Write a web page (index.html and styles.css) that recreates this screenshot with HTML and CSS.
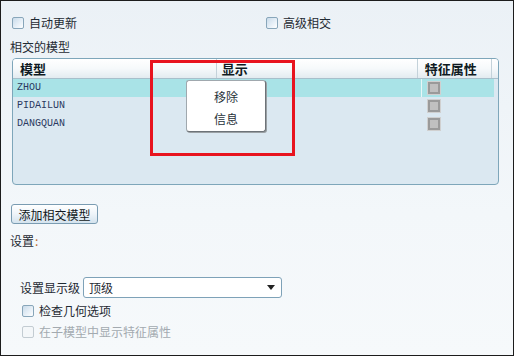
FILE: index.html
```html
<!DOCTYPE html>
<html>
<head>
<meta charset="utf-8">
<link rel="stylesheet" href="styles.css">
</head>
<body>
<div class="frame">
  <div class="top-row">
    <label class="chk-item first"><span class="chk"></span><span>自动更新</span></label>
    <label class="chk-item second"><span class="chk"></span><span>高级相交</span></label>
  </div>
  <div class="section-label">相交的模型</div>
  <div class="table">
    <div class="thead">
      <div class="th c1">模型</div>
      <div class="th c2">显示</div>
      <div class="th c3">特征属性</div>
      <div class="th c4"></div>
    </div>
    <div class="tbody">
      <div class="tr selected">
        <div class="td c1 name">ZHOU</div>
        <div class="td c2"></div>
        <div class="td c3"><span class="gchk"></span></div>
      </div>
      <div class="tr">
        <div class="td c1 name">PIDAILUN</div>
        <div class="td c2"></div>
        <div class="td c3"><span class="gchk"></span></div>
      </div>
      <div class="tr">
        <div class="td c1 name">DANGQUAN</div>
        <div class="td c2"></div>
        <div class="td c3"><span class="gchk"></span></div>
      </div>
    </div>
    <div class="menu">
      <div class="menu-item">移除</div>
      <div class="menu-item">信息</div>
    </div>
    <div class="highlight-box"></div>
  </div>
  <div class="btn-row"><button class="btn">添加相交模型</button></div>
  <div class="settings-label">设置<span class="colon">:</span></div>
  <div class="select-row">
    <span class="select-label">设置显示级</span>
    <div class="select"><span>顶级</span><span class="arrow"></span></div>
  </div>
  <label class="chk-item opt"><span class="chk"></span><span>检查几何选项</span></label>
  <label class="chk-item opt disabled"><span class="chk"></span><span>在子模型中显示特征属性</span></label>
</div>
</body>
</html>
```
FILE: styles.css
```css
* { box-sizing: border-box; }
html, body { margin: 0; padding: 0; }
body {
  width: 514px;
  height: 356px;
  font-family: "Noto Sans CJK SC", "Noto Sans", sans-serif;
  font-size: 12px;
  color: #1f2a33;
}
.frame {
  width: 514px;
  height: 356px;
  border: 1px solid #1c1c1c;
  background: linear-gradient(180deg, #ebf1f6 0%, #f3f7fa 60%, #f6f9fb 100%);
  display: flex;
  flex-direction: column;
  align-items: flex-start;
}
.top-row {
  display: flex;
  width: 100%;
  margin-top: 15px;
  height: 14px;
}
.chk-item {
  display: flex;
  align-items: center;
  height: 14px;
  line-height: 14px;
  gap: 5px;
}
.chk-item.first { margin-left: 11px; width: 254px; }
.chk {
  width: 12px;
  height: 12px;
  border: 1px solid #88a6ba;
  border-radius: 2px;
  background: linear-gradient(135deg, #c9dbea 0%, #e9f1f8 60%, #ffffff 100%);
  flex: none;
}
.section-label {
  margin-top: 10px;
  margin-left: 9px;
  height: 14px;
  line-height: 14px;
}
.table {
  position: relative;
  margin-top: 4px;
  margin-left: 11px;
  width: 487px;
  height: 127px;
  border: 1px solid #7ea6ba;
  border-radius: 4px;
  background: #dbe8f1;
  overflow: visible;
}
.thead {
  display: flex;
  height: 20px;
  background: linear-gradient(180deg, #ffffff 0%, #f6f9fb 50%, #e3ebf0 100%);
  border-bottom: 1px solid #a8bfcb;
  border-radius: 3px 3px 0 0;
}
.th {
  font-weight: 700;
  font-size: 13px;
  line-height: 19px;
  color: #0f1a22;
  border-right: 1px solid #c4d2da;
  padding-left: 6px;
}
.c1 { width: 206px; padding-left: 7px; }
.c2 { width: 203px; }
.c3 { width: 75px; }
.th.c2 { padding-left: 5px; }
.th.c3 { padding-left: 7px; }
.c4 { flex: 1; border-right: none; }
.tbody { display: flex; flex-direction: column; }
.tr {
  display: flex;
  height: 18px;
  width: 481px;
}
.tr.selected { background: #a9e3e7; }
.tr.selected .c2 { border-right: 1px solid #e8f6f7; }
.td { height: 18px; }
.td.c2 { width: 203px; }
.td.c3 { width: 72px; padding-left: 6px; display: flex; align-items: center; }
.name {
  font-family: "Liberation Mono", monospace;
  font-size: 10px;
  line-height: 17px;
  color: #2a3860;
  padding-left: 4px;
  width: 206px;
}
.gchk {
  width: 12px;
  height: 12px;
  background: #c0c0c0;
  border: 2px solid #9a9a9a;
  outline: 1px solid #d0d0d0;
}
.menu {
  position: absolute;
  left: 173px;
  top: 21px;
  width: 80px;
  height: 52px;
  background: #ffffff;
  border: 1px solid #a0a8ae;
  border-right-color: #6d7378;
  border-bottom-color: #6d7378;
  border-radius: 3px;
  box-shadow: 1px 1px 0 #9aa0a4;
  display: flex;
  flex-direction: column;
  align-items: center;
  padding-top: 5px;
}
.menu-item {
  height: 22px;
  line-height: 22px;
  font-size: 12px;
  color: #27323a;
}
.highlight-box {
  position: absolute;
  left: 137px;
  top: 1px;
  width: 145px;
  height: 96px;
  border: 3px solid #e8141f;
}
.btn-row { margin-top: 19px; margin-left: 10px; }
.btn {
  width: 87px;
  height: 20px;
  padding: 0;
  font-family: "Noto Sans CJK SC", sans-serif;
  font-size: 12px;
  line-height: 17px;
  color: #101820;
  border: 1px solid #7a9cb2;
  border-radius: 3px;
  background: linear-gradient(180deg, #ffffff 0%, #eef4f9 50%, #d4e3ee 100%);
}
.settings-label {
  margin-top: 10px;
  margin-left: 9px;
  height: 14px;
  line-height: 14px;
}
.colon { color: #c06a2a; margin-left: 1px; }
.select-row {
  display: flex;
  align-items: center;
  margin-top: 29px;
  margin-left: 19px;
  gap: 3px;
  height: 21px;
}
.select {
  width: 199px;
  height: 21px;
  border: 1px solid #7ea2b8;
  border-radius: 3px;
  background: #ffffff;
  display: flex;
  align-items: center;
  justify-content: space-between;
  padding: 0 6px 0 5px;
  line-height: 19px;
}
.arrow {
  width: 0;
  height: 0;
  border-left: 4px solid transparent;
  border-right: 4px solid transparent;
  border-top: 5px solid #222;
}
.chk-item.opt { margin-left: 21px; margin-top: 6px; }
.chk-item.opt.disabled { margin-top: 7px; color: #a3aab0; }
.chk-item.disabled .chk {
  border-color: #c3ccd2;
  background: #f4f7f9;
}
```
